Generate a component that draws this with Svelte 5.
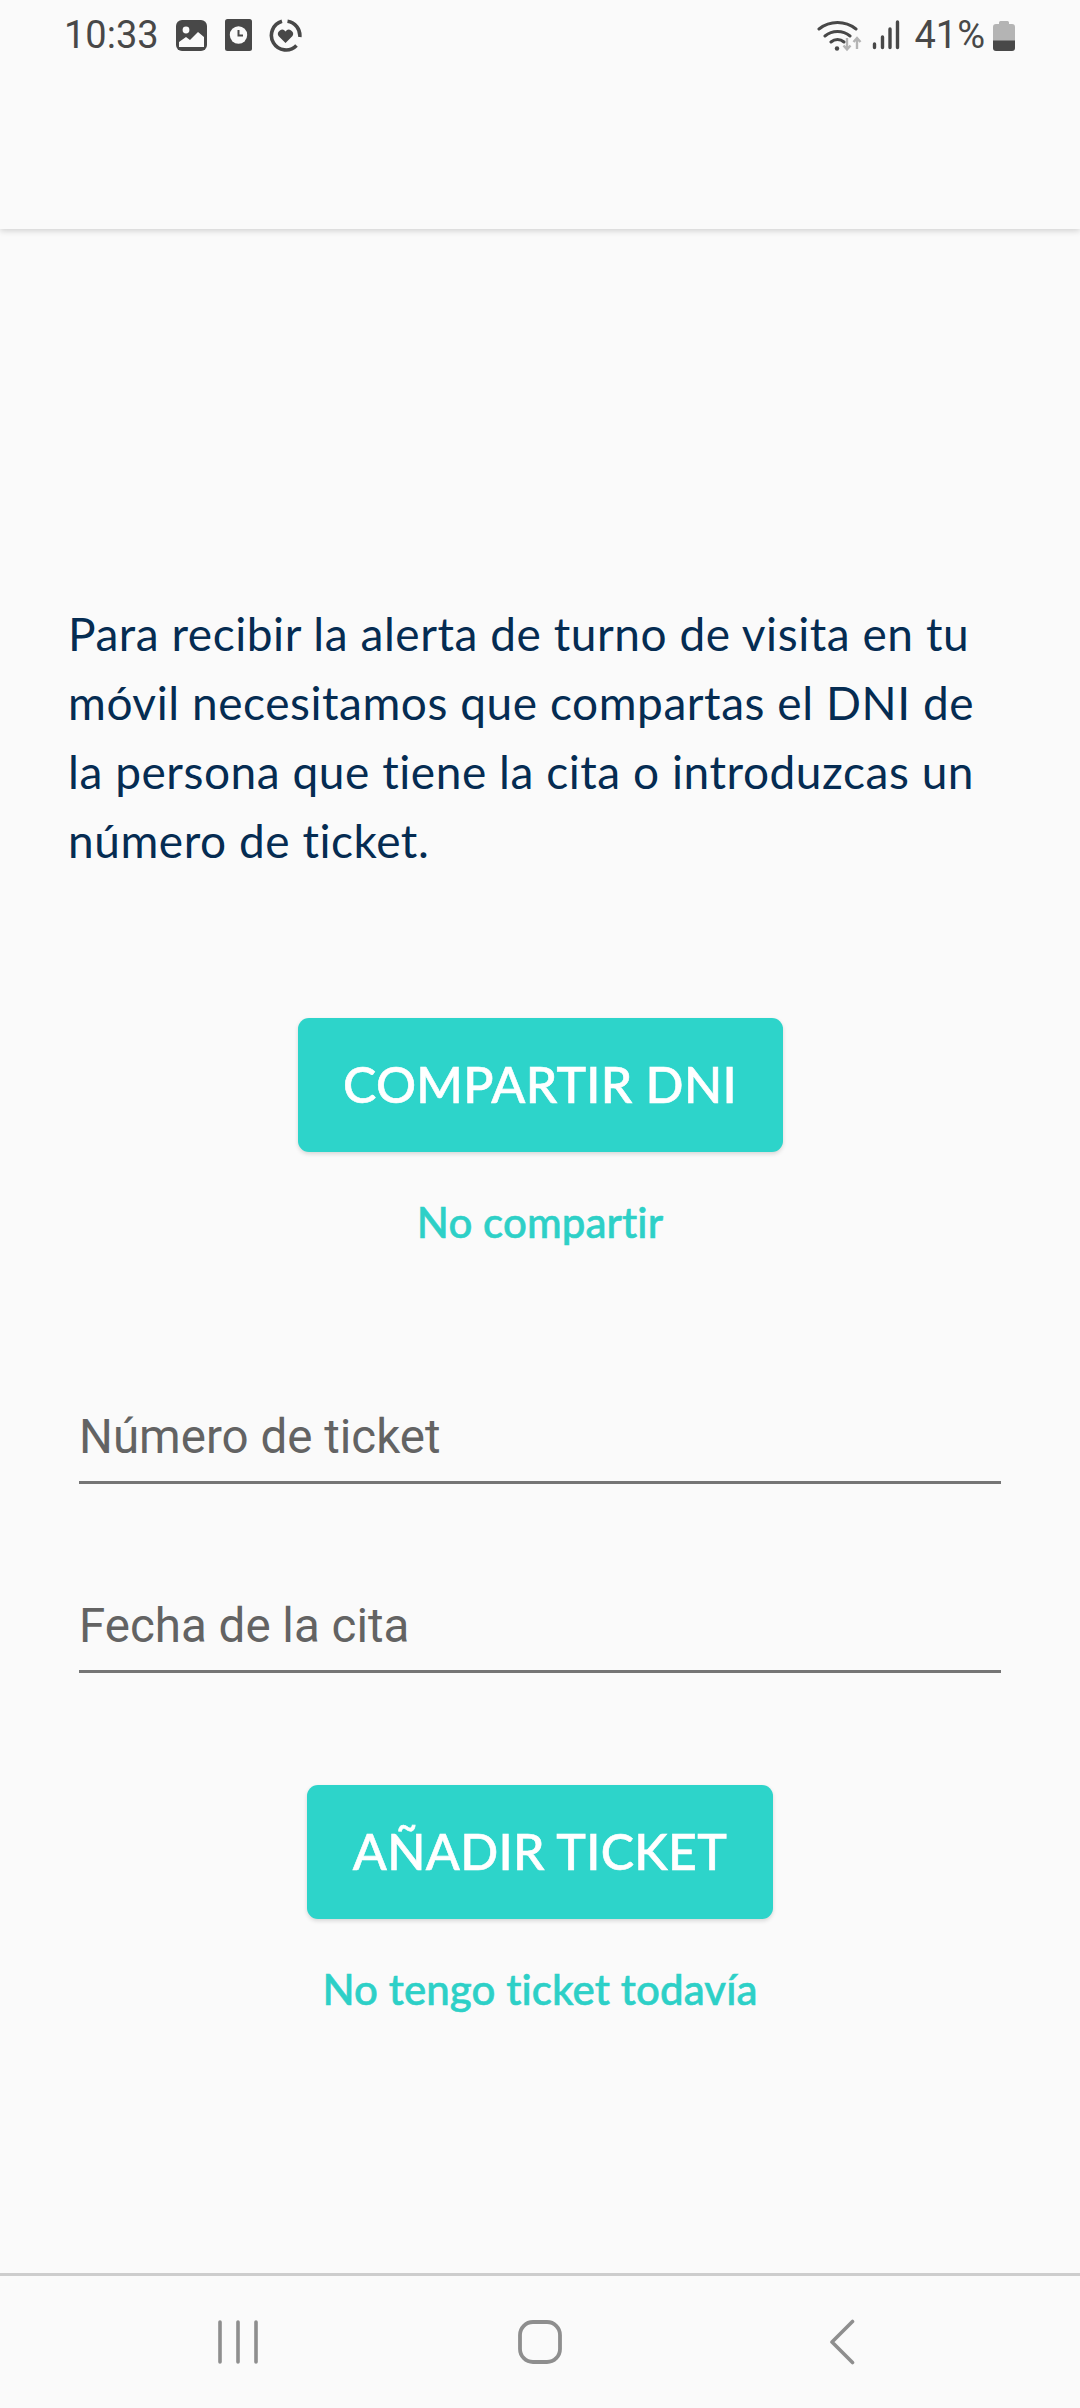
<script>
	const fields = ['Número de ticket', 'Fecha de la cita'];
</script>

<div class="screen">
	<header class="appbar">
		<div class="status">
			<span class="time">10:33</span>
			<svg class="ic-image" viewBox="0 0 31 31">
				<rect width="31" height="31" rx="6" fill="#484848" />
				<circle cx="10" cy="10" r="3.4" fill="#fafafa" />
				<path d="M3 27v-5l7-5 4 3 8-8 6 5v10z" fill="#fafafa" />
			</svg>
			<svg class="ic-clock" viewBox="0 0 27 32">
				<rect width="27" height="32" rx="2.5" fill="#484848" />
				<circle cx="13.5" cy="16" r="8.7" fill="#fafafa" />
				<path d="M13.5 11v5.5h4.5" fill="none" stroke="#484848" stroke-width="2" />
			</svg>
			<svg class="ic-heart" viewBox="0 0 33 33">
				<path d="M18.5 2.2A14.6 14.6 0 0 1 30.8 18M27.5 26.5A14.6 14.6 0 1 1 13 2.3" fill="none" stroke="#484848" stroke-width="3.6" />
				<path d="M16.5 24l-7-7a4.2 4.2 0 0 1 7-4.600a4.200 4.200 0 0 1 7 4.600z" fill="#484848" />
			</svg>
			<span class="spacer"></span>
			<svg class="ic-wifi" viewBox="0 0 46 34">
				<path d="M2 11a30 30 0 0 1 37 0M8 18a20 20 0 0 1 25 0M14 24a10 10 0 0 1 13 0" fill="none" stroke="#484848" stroke-width="3" stroke-linecap="round" />
				<circle cx="20" cy="30.500" r="2.200" fill="#484848" />
				<path d="M30 20v11M26.500 27.500l3.500 4 3.500-4M40 31V20M36.500 24l3.500-4 3.500 4" fill="none" stroke="#b4b4b4" stroke-width="2.400" />
			</svg>
			<svg class="ic-signal" viewBox="0 0 28 30">
				<path d="M2.500 24v3.500M10.500 17v10.500M18 9v18.500M25.500 2v25.500" fill="none" stroke="#484848" stroke-width="3.400" stroke-linecap="round" />
			</svg>
			<span class="pct">41%</span>
			<svg class="ic-battery" viewBox="0 0 22 31">
				<path d="M6 2.500q0-1.500 1.500-1.500h7q1.500 0 1.500 1.500V4h3q3 0 3 3v14H0V7q0-3 3-3h3z" fill="#b4b4b4" />
				<path d="M0 20.500h22V28q0 3-3 3H3q-3 0-3-3z" fill="#484848" />
			</svg>
		</div>
	</header>

	<main class="content">
		<p class="intro">Para recibir la alerta de turno de visita en tu móvil necesitamos que compartas el DNI de la persona que tiene la cita o introduzcas un número de ticket.</p>

		<button class="primary dni">COMPARTIR DNI</button>
		<span class="link">No compartir</span>

		<div class="fields">
			{#each fields as field}
				<div class="field">{field}</div>
			{/each}
		</div>

		<button class="primary ticket">AÑADIR TICKET</button>
		<span class="link">No tengo ticket todavía</span>
	</main>

	<nav class="navbar">
		<svg class="nav-recent" viewBox="0 0 42 44">
			<path d="M3 2v40M21 2v40M39 2v40" fill="none" stroke="#8e8e8e" stroke-width="3.600" stroke-linecap="round" />
		</svg>
		<svg class="nav-home" viewBox="0 0 44 44">
			<rect x="2" y="2" width="40" height="40" rx="13" fill="none" stroke="#8e8e8e" stroke-width="3.800" />
		</svg>
		<svg class="nav-back" viewBox="0 0 26 46">
			<path d="M23.500 2.500L3 23l20.500 20.500" fill="none" stroke="#8e8e8e" stroke-width="3.600" stroke-linecap="round" stroke-linejoin="round" />
		</svg>
	</nav>
</div>

<style>
	:global(body) {
		margin: 0;
		background: #fafafa;
	}

	.screen {
		width: 1080px;
		height: 2408px;
		display: flex;
		flex-direction: column;
		background: #fafafa;
		overflow: hidden;
	}

	/* Top bar */

	.appbar {
		height: 229px;
		flex-shrink: 0;
		box-sizing: border-box;
		box-shadow: 0 2px 6px rgba(0, 0, 0, 0.16);
		padding: 18px 65px 0 64px;
	}

	.status {
		display: flex;
		align-items: center;
		height: 34px;
		color: #484848;
		font-family: Roboto, sans-serif;
		font-size: 38px;
	}

	.time {
		margin-right: 17px;
	}

	.ic-image { width: 31px; height: 31px; margin-right: 18px; }
	.ic-clock { width: 27px; height: 32px; margin-right: 17px; }
	.ic-heart { width: 33px; height: 33px; }
	.spacer { flex: 1; }
	.ic-wifi { width: 46px; height: 34px; margin-right: 9px; }
	.ic-signal { width: 28px; height: 30px; margin-right: 14px; }
	.pct { margin-right: 8px; }
	.ic-battery { width: 22px; height: 31px; }

	/* Content */

	.content {
		flex: 1;
		display: flex;
		flex-direction: column;
		align-items: center;
	}

	.intro {
		align-self: stretch;
		margin: 370px 80px 0 68px;
		color: #052c52;
		font-family: Lato, sans-serif;
		font-size: 46px;
		letter-spacing: 0.55px;
		font-variant-ligatures: none;
		line-height: 69px;
	}

	.primary {
		height: 134px;
		border: 0;
		border-radius: 11px;
		background: #2dd4ca;
		color: #fff;
		font-family: Lato, sans-serif;
		font-size: 50px;
		font-weight: 500;
		letter-spacing: 0.3px;
		font-variant-ligatures: none;
		-webkit-text-stroke: 0.6px #fff;
		padding: 0 0 3px;
		box-shadow: 0 2px 4px rgba(0, 0, 0, 0.14);
	}

	.dni {
		width: 485px;
		margin-top: 143px;
	}

	.ticket {
		width: 466px;
		margin-top: 112px;
	}

	.link {
		color: #2dd0c7;
		font-family: Lato, sans-serif;
		font-size: 42px;
		font-weight: 500;
		letter-spacing: 0.1px;
		font-variant-ligatures: none;
		-webkit-text-stroke: 0.6px #2dd0c7;
		line-height: 46px;
		margin-top: 47px;
	}

	.fields {
		align-self: stretch;
		margin: 166px 79px 0;
		display: flex;
		flex-direction: column;
		gap: 116px;
	}

	.field {
		height: 70px;
		border-bottom: 3px solid #757575;
		color: #636363;
		font-family: Roboto, sans-serif;
		font-size: 47.5px;
		line-height: 52px;
	}

	/* Navigation bar */

	.navbar {
		height: 135px;
		flex-shrink: 0;
		box-sizing: border-box;
		border-top: 3px solid #cdcdcd;
		display: grid;
		grid-template-columns: 1fr 1fr 1fr;
		justify-items: center;
		align-items: center;
		padding: 0 87px;
	}

	.nav-recent { width: 42px; height: 44px; }
	.nav-home { width: 44px; height: 44px; }
	.nav-back { width: 26px; height: 46px; }
</style>
